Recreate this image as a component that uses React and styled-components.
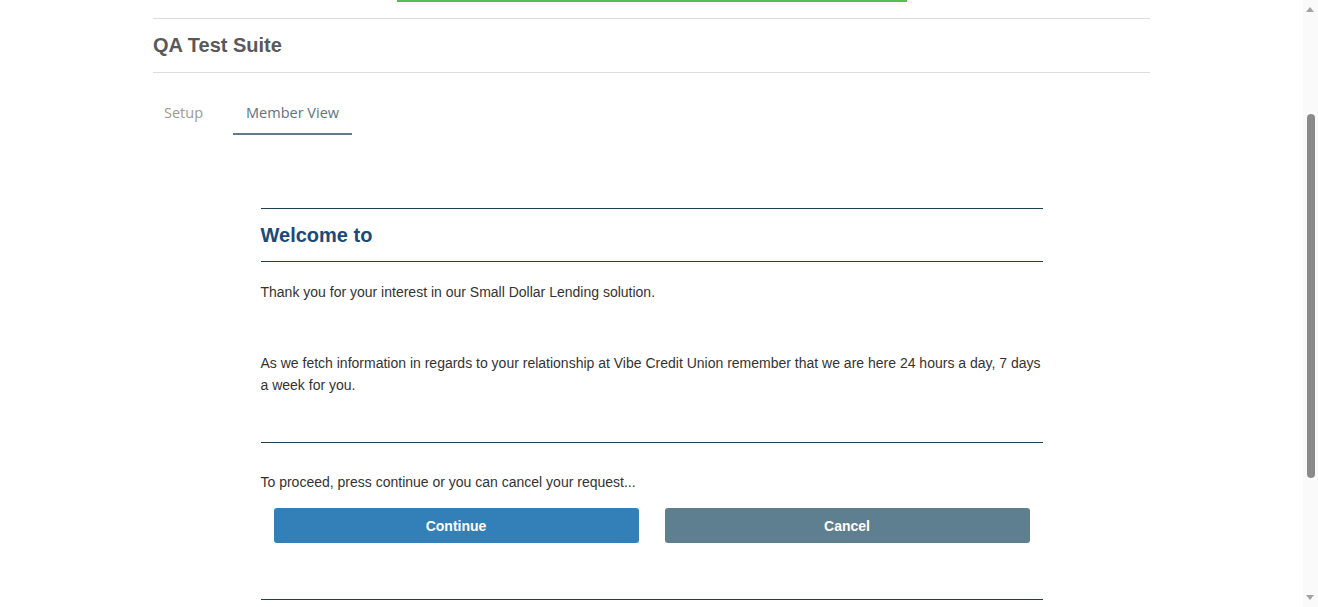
import React, { useLayoutEffect } from "react";
import styled, { createGlobalStyle } from "styled-components";

const GlobalStyle = createGlobalStyle`
  html, body {
    margin: 0;
    padding: 0;
    background: #ffffff;
  }
  body {
    padding-right: 15px;
    font-family: "Liberation Sans", Arial, sans-serif;
    color: #333333;
  }
`;

const Page = styled.div`
  padding-top: 189px;
  padding-bottom: 200px;
`;

const Container = styled.div`
  width: 997px;
  margin: 0 auto;
`;

const Toast = styled.div`
  position: fixed;
  top: 0;
  left: calc((100% - 15px) / 2);
  transform: translateX(-50%);
  width: 510px;
  height: 2px;
  background: #52bf4f;
  box-shadow: 0 2px 6px rgba(0, 0, 0, 0.1);
  z-index: 10;
`;

const ScrollTrack = styled.div`
  position: fixed;
  top: 0;
  right: 0;
  bottom: 0;
  width: 15px;
  background: #fafafa;
  z-index: 20;
`;

const Arrow = styled.div`
  position: absolute;
  left: 3px;
  width: 0;
  height: 0;
  border-left: 4.5px solid transparent;
  border-right: 4.5px solid transparent;
  ${(p) =>
    p.$down
      ? "bottom: 7px; border-top: 5px solid #a3a3a3;"
      : "top: 7px; border-bottom: 5px solid #a3a3a3;"}
`;

const Thumb = styled.div`
  position: absolute;
  top: 114px;
  left: 4px;
  width: 8px;
  height: 364px;
  border-radius: 4px;
  background: #8a8a8a;
`;

const Header = styled.div`
  border-top: 1px solid #dedede;
  border-bottom: 1px solid #dedede;
  height: 53px;
  display: flex;
  align-items: center;
`;

const Title = styled.h1`
  margin: 0;
  font-family: "Liberation Sans", Arial, sans-serif;
  font-size: 20px;
  font-weight: bold;
  color: #58595b;
`;

const Tabs = styled.nav`
  display: flex;
  gap: 18px;
  margin-top: 20px;
`;

const Tab = styled.div`
  padding: 10px ${(p) => (p.$active ? "13px" : "12px")} 10px ${(p) => (p.$active ? "13px" : "11px")};
  font-family: "Open Sans", sans-serif;
  font-size: 14.5px;
  line-height: 20px;
  color: ${(p) => (p.$active ? "#5f7382" : "#9a9a9a")};
  border-bottom: 2px solid ${(p) => (p.$active ? "#5e7a8c" : "transparent")};
`;

const Card = styled.section`
  width: 782px;
  margin: 73px auto 0;
  border-top: 1px solid #1f3f55;
`;

const CardHead = styled.div`
  height: 52px;
  display: flex;
  align-items: center;
  border-bottom: 1px solid #1f3f55;
`;

const Welcome = styled.h2`
  margin: 0;
  font-size: 20px;
  font-weight: bold;
  color: #1b4a79;
`;

const Text = styled.p`
  margin: ${(p) => p.$margin || "0"};
  font-size: 14px;
  line-height: 22px;
  color: #333333;
`;

const Body = styled.div`
  padding-top: 19px;
  padding-bottom: 46px;
  border-bottom: 1px solid #1f3f55;
`;

const Footer = styled.div`
  padding-top: 28px;
  padding-bottom: 56px;
  border-bottom: 1px solid #1f3f55;
`;

const ButtonRow = styled.div`
  display: grid;
  grid-template-columns: 1fr 1fr;
  gap: 26px;
  padding: 0 13px;
  margin-top: 15px;
`;

const Button = styled.button`
  height: 35px;
  border: none;
  border-radius: 3px;
  background: ${(p) => (p.$variant === "cancel" ? "#5e7f90" : "#337fb8")};
  color: #ffffff;
  font-family: "Liberation Sans", Arial, sans-serif;
  font-size: 14px;
  font-weight: bold;
  cursor: pointer;
`;

export default function App() {
  useLayoutEffect(() => {
    window.scrollTo(0, 171);
    const t = setTimeout(() => window.scrollTo(0, 171), 50);
    return () => clearTimeout(t);
  }, []);

  return (
    <>
      <GlobalStyle />
      <Toast />
      <ScrollTrack>
        <Arrow />
        <Thumb />
        <Arrow $down />
      </ScrollTrack>
      <Page>
        <Container>
          <Header>
            <Title>QA Test Suite</Title>
          </Header>
          <Tabs>
            <Tab>Setup</Tab>
            <Tab $active>Member View</Tab>
          </Tabs>
          <Card>
            <CardHead>
              <Welcome>Welcome to</Welcome>
            </CardHead>
            <Body>
              <Text>Thank you for your interest in our Small Dollar Lending solution.</Text>
              <Text $margin="49px 0 0">
                As we fetch information in regards to your relationship at Vibe Credit Union remember that we are here 24 hours a day, 7 days a week for you.
              </Text>
            </Body>
            <Footer>
              <Text>To proceed, press continue or you can cancel your request...</Text>
              <ButtonRow>
                <Button>Continue</Button>
                <Button $variant="cancel">Cancel</Button>
              </ButtonRow>
            </Footer>
          </Card>
        </Container>
      </Page>
    </>
  );
}
